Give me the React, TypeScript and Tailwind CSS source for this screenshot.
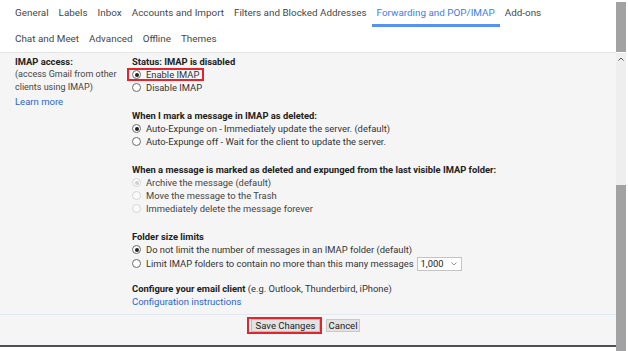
import React from 'react';

const tabsTop = ['General', 'Labels', 'Inbox', 'Accounts and Import', 'Filters and Blocked Addresses', 'Forwarding and POP/IMAP', 'Add-ons'];
const tabsBottom = ['Chat and Meet', 'Advanced', 'Offline', 'Themes'];

function Radio({ checked, disabled }: { checked?: boolean; disabled?: boolean }) {
  return (
    <span
      className={`flex h-[9px] w-[9px] shrink-0 items-center justify-center rounded-full border ${
        disabled ? 'border-[#d6d6d6] bg-[#fafafa]' : 'border-[#6b6b6b] bg-white'
      }`}
    >
      {checked && <span className={`h-[4px] w-[4px] rounded-full ${disabled ? 'bg-[#cfcfcf]' : 'bg-[#222]'}`} />}
    </span>
  );
}

function Option({ label, checked, disabled }: { label: string; checked?: boolean; disabled?: boolean }) {
  return (
    <div className={`flex h-[13px] items-center gap-[5px] ${disabled ? 'text-[#444]' : 'text-[#333]'}`}>
      <Radio checked={checked} disabled={disabled} />
      <span>{label}</span>
    </div>
  );
}

function Heading({ children }: { children: React.ReactNode }) {
  return <div className="h-[13px] font-bold leading-[13px] text-[#222]">{children}</div>;
}

export default function App() {
  return (
    <div className="flex h-[351px] w-[628px] overflow-hidden bg-white font-['Roboto',sans-serif]">
      <div className="flex w-[616px] flex-col">
        {/* Tabs */}
        <div className="h-[52px] pl-[10px] text-[9.9px] text-[#474747]">
          <div className="flex h-[27px]">
            {tabsTop.map((t) =>
              t === 'Forwarding and POP/IMAP' ? (
                <div key={t} className="flex items-center border-b-[3px] border-[#5592f2] px-[5px] pt-[3px] text-[#3a7ee8]">
                  {t}
                </div>
              ) : (
                <div key={t} className="flex items-center px-[5px]">
                  {t}
                </div>
              )
            )}
          </div>
          <div className="flex h-[25px]">
            {tabsBottom.map((t) => (
              <div key={t} className="flex items-center px-[5px]">
                {t}
              </div>
            ))}
          </div>
        </div>

        {/* Settings panel */}
        <div className="flex h-[295px] flex-col border-t border-b-2 border-t-[#e4e4e4] border-b-[#4e4e58] bg-[#f5f5f5] text-[9.4px] leading-[13px]">
          <div className="flex pt-[2px]">
            <div className="w-[132px] shrink-0 pl-[15px]">
              <Heading>IMAP access:</Heading>
              <div className="text-[9px] text-[#444]">(access Gmail from other</div>
              <div className="text-[9px] text-[#444]">clients using IMAP)</div>
              <div className="mt-[1px] text-[9.5px] text-[#2a66cf]">Learn more</div>
            </div>
            <div className="flex flex-1 flex-col">
              <Heading>Status: IMAP is disabled</Heading>
              <div className="-ml-[5px] flex h-[13px] w-fit items-center gap-[5px] border-2 border-[#e3242b] pl-[3px] pr-[3px] text-[#333]">
                <Radio checked />
                <span>Enable IMAP</span>
              </div>
              <Option label="Disable IMAP" />

              <div className="mt-[15px]">
                <Heading>When I mark a message in IMAP as deleted:</Heading>
                <Option label="Auto-Expunge on - Immediately update the server. (default)" checked />
                <Option label="Auto-Expunge off - Wait for the client to update the server." />
              </div>

              <div className="mt-[15px]">
                <Heading>When a message is marked as deleted and expunged from the last visible IMAP folder:</Heading>
                <Option label="Archive the message (default)" checked disabled />
                <Option label="Move the message to the Trash" disabled />
                <Option label="Immediately delete the message forever" disabled />
              </div>

              <div className="mt-[15px]">
                <Heading>Folder size limits</Heading>
                <Option label="Do not limit the number of messages in an IMAP folder (default)" checked />
                <div className="flex h-[15px] items-center gap-[5px] text-[#333]">
                  <Radio />
                  <span>Limit IMAP folders to contain no more than this many messages</span>
                  <span className="-ml-[2px] flex h-[14px] w-[45px] items-center justify-between border border-[#c4c4c4] bg-white pl-[3px] pr-[4px] text-[#222]">
                    1,000
                    <svg width="6" height="4" viewBox="0 0 6 4" className="mt-[1px]">
                      <polyline points="0.5,0.5 3,3 5.5,0.5" fill="none" stroke="#888" strokeWidth="0.9" />
                    </svg>
                  </span>
                </div>
              </div>

              <div className="mt-[11px]">
                <div className="h-[13px] text-[#333]">
                  <span className="font-bold text-[#222]">Configure your email client</span> (e.g. Outlook, Thunderbird, iPhone)
                </div>
                <div className="h-[13px] text-[9.5px] text-[#2a66cf]">Configuration instructions</div>
              </div>
            </div>
          </div>

          <div className="mt-[6px] border-t border-[#e3e7ee]" />
          <div className="mt-[2px] flex pl-[247px]">
            <div className="flex h-[17px] items-center border-2 border-[#e3242b] pl-[2px]">
              <button className="h-[13px] w-[69px] border border-[#bdbdbd] bg-[#e2e2e2] text-[9.5px] leading-[11px] text-[#222]">
                Save Changes
              </button>
            </div>
            <div className="ml-[4px] flex h-[17px] items-center">
              <button className="h-[13px] w-[34px] border border-[#c8c8c8] bg-[#e2e2e2] text-[9.5px] leading-[11px] text-[#222]">
                Cancel
              </button>
            </div>
          </div>
        </div>
      </div>

      {/* Scrollbar */}
      <div className="flex w-[10px] flex-col pt-[2px]">
        <div className="h-[50px] bg-[#a2a2a2]" />
        <div className="mt-[1px] flex h-[132px] justify-center bg-[#eeeeee] pt-[4px]">
          <svg width="6" height="4" viewBox="0 0 6 4">
            <polyline points="0.5,3.5 3,1 5.5,3.5" fill="none" stroke="#555" strokeWidth="1" />
          </svg>
        </div>
        <div className="flex-1 bg-[#a2a2a2]" />
      </div>
    </div>
  );
}
